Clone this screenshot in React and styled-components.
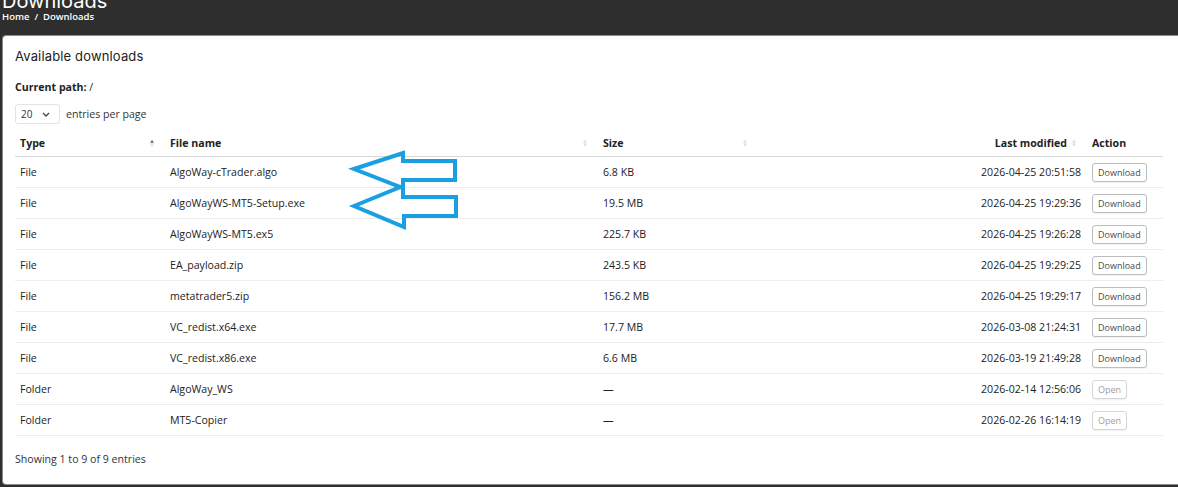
import React from 'react'
import styled, { createGlobalStyle } from 'styled-components'

const GlobalStyle = createGlobalStyle`
    html, body {
        margin: 0;
        padding: 0;
        background: #2e2e2e;
        overflow: hidden;
    }
    body {
        font-family: "Open Sans", "Liberation Sans", sans-serif;
        color: #212529;
    }
`

const Page = styled.div`
    position: relative;
    width: 1178px;
    height: 487px;
    overflow: hidden;
`

const Header = styled.header`
    height: 35px;
    padding: 0 2px;
    overflow: hidden;
    color: #fff;
`

const PageTitle = styled.h1`
    margin: -10px 0 0;
    font-family: "Inter", "Liberation Sans", sans-serif;
    font-size: 20px;
    font-weight: 400;
    line-height: 23px;
`

const Breadcrumb = styled.div`
    font-size: 9.5px;
    font-weight: 600;
    line-height: 12px;
    margin-top: -2px;
`

const Card = styled.section`
    margin: 0 0 0 2px;
    width: 1190px;
    height: 450px;
    box-sizing: border-box;
    background: #fff;
    border: 1px solid #8a8a8a;
    border-radius: 4px;
    padding: 11px 0 0 12px;
`

const CardTitle = styled.h2`
    margin: 0;
    font-family: "Inter", "Liberation Sans", sans-serif;
    font-size: 13px;
    font-weight: 400;
    line-height: 18px;
    color: #222;
    letter-spacing: 0.15px;
`

const PathLine = styled.div`
    margin-top: 14px;
    font-size: 10.6px;
    line-height: 16px;
    font-weight: 700;
    color: #222;
    span {
        font-weight: 400;
    }
`

const LengthRow = styled.div`
    display: flex;
    align-items: center;
    gap: 6px;
    margin-top: 9px;
    font-size: 10.6px;
    color: #333;
`

const Select = styled.div`
    width: 45px;
    height: 20px;
    box-sizing: border-box;
    border: 1px solid #e3e3e3;
    border-radius: 3px;
    display: flex;
    align-items: center;
    justify-content: space-between;
    padding: 0 9px 0 5px;
    font-size: 10px;
    color: #333;
`

const Table = styled.table`
    margin-top: 6px;
    width: 1148px;
    table-layout: fixed;
    border-collapse: collapse;
    font-size: 10.6px;
    color: #222;
`

const Th = styled.th`
    height: 26px;
    padding: 0 ${p => p.$pr || 5}px 0 5px;
    text-align: ${p => (p.$right ? 'right' : 'left')};
    font-weight: 700;
    border-bottom: 1px solid #d8d8d8;
    white-space: nowrap;
    position: relative;
`

const Td = styled.td`
    height: 30px;
    padding: 0 ${p => p.$pr || 5}px 0 5px;
    text-align: ${p => (p.$right ? 'right' : 'left')};
    border-bottom: 1px solid #ececec;
    white-space: nowrap;
`

const SortWrap = styled.span`
    position: absolute;
    right: 10px;
    top: 50%;
    transform: translateY(-50%);
    display: flex;
    flex-direction: column;
    line-height: 4px;
    font-size: 6px;
`

const Tri = styled.span`
    color: ${p => (p.$on ? '#777' : '#e2e2e2')};
`

const Button = styled.button`
    font-family: "Open Sans", "Liberation Sans", sans-serif;
    font-size: 9px;
    height: 19px;
    padding: 0 5px;
    background: #fff;
    border: 1px solid ${p => (p.$muted ? '#d6d6d6' : '#bdbdbd')};
    border-radius: 3px;
    color: ${p => (p.$muted ? '#a0a0a0' : '#4a4a4a')};
    box-shadow: 0 1px 1px rgba(0, 0, 0, 0.06);
`

const Footer = styled.div`
    margin-top: 15px;
    font-size: 10.6px;
    line-height: 16px;
    color: #333;
`

const Overlay = styled.svg`
    position: absolute;
    left: 0;
    top: 0;
    pointer-events: none;
`

function Sort({ up }) {
    return (
        <SortWrap>
            <Tri $on={up}>▲</Tri>
            <Tri>▼</Tri>
        </SortWrap>
    )
}

const rows = [
    ['File', 'AlgoWay-cTrader.algo', '6.8 KB', '2026-04-25 20:51:58', 'Download'],
    ['File', 'AlgoWayWS-MT5-Setup.exe', '19.5 MB', '2026-04-25 19:29:36', 'Download'],
    ['File', 'AlgoWayWS-MT5.ex5', '225.7 KB', '2026-04-25 19:26:28', 'Download'],
    ['File', 'EA_payload.zip', '243.5 KB', '2026-04-25 19:29:25', 'Download'],
    ['File', 'metatrader5.zip', '156.2 MB', '2026-04-25 19:29:17', 'Download'],
    ['File', 'VC_redist.x64.exe', '17.7 MB', '2026-03-08 21:24:31', 'Download'],
    ['File', 'VC_redist.x86.exe', '6.6 MB', '2026-03-19 21:49:28', 'Download'],
    ['Folder', 'AlgoWay_WS', '—', '2026-02-14 12:56:06', 'Open'],
    ['Folder', 'MT5-Copier', '—', '2026-02-26 16:14:19', 'Open'],
]

export default function App() {
    return (
        <Page>
            <GlobalStyle />
            <Header>
                <PageTitle>Downloads</PageTitle>
                <Breadcrumb>Home&nbsp; /&nbsp; Downloads</Breadcrumb>
            </Header>
            <Card>
                <CardTitle>Available downloads</CardTitle>
                <PathLine>Current path: <span>/</span></PathLine>
                <LengthRow>
                    <Select>
                        20
                        <svg width="8" height="5" viewBox="0 0 8 5">
                            <path d="M1 1l3 3 3-3" fill="none" stroke="#444" strokeWidth="1.3" />
                        </svg>
                    </Select>
                    entries per page
                </LengthRow>
                <Table>
                    <colgroup>
                        <col style={{ width: 150 }} />
                        <col style={{ width: 433 }} />
                        <col style={{ width: 160 }} />
                        <col style={{ width: 329 }} />
                        <col style={{ width: 76 }} />
                    </colgroup>
                    <thead>
                        <tr>
                            <Th>Type<Sort up /></Th>
                            <Th>File name<Sort /></Th>
                            <Th>Size<Sort /></Th>
                            <Th $right $pr={20}>Last modified<Sort /></Th>
                            <Th>Action</Th>
                        </tr>
                    </thead>
                    <tbody>
                        {rows.map(([type, name, size, date, action]) => (
                            <tr key={name}>
                                <Td>{type}</Td>
                                <Td>{name}</Td>
                                <Td>{size}</Td>
                                <Td $right $pr={6}>{date}</Td>
                                <Td>
                                    <Button $muted={action === 'Open'}>{action}</Button>
                                </Td>
                            </tr>
                        ))}
                    </tbody>
                </Table>
                <Footer>Showing 1 to 9 of 9 entries</Footer>
            </Card>
            <Overlay width="1178" height="487" viewBox="0 0 1178 487">
                <g fill="none" stroke="#1a9fe3" strokeWidth="4" strokeLinejoin="miter">
                    <path d="M354 169 L403 153 L403 161 L455 161 L455 180 L403 180 L403 188 Z" />
                    <path d="M354 206 L403 186 L403 197 L456 197 L456 216 L404 216 L404 227 Z" />
                </g>
            </Overlay>
        </Page>
    )
}
